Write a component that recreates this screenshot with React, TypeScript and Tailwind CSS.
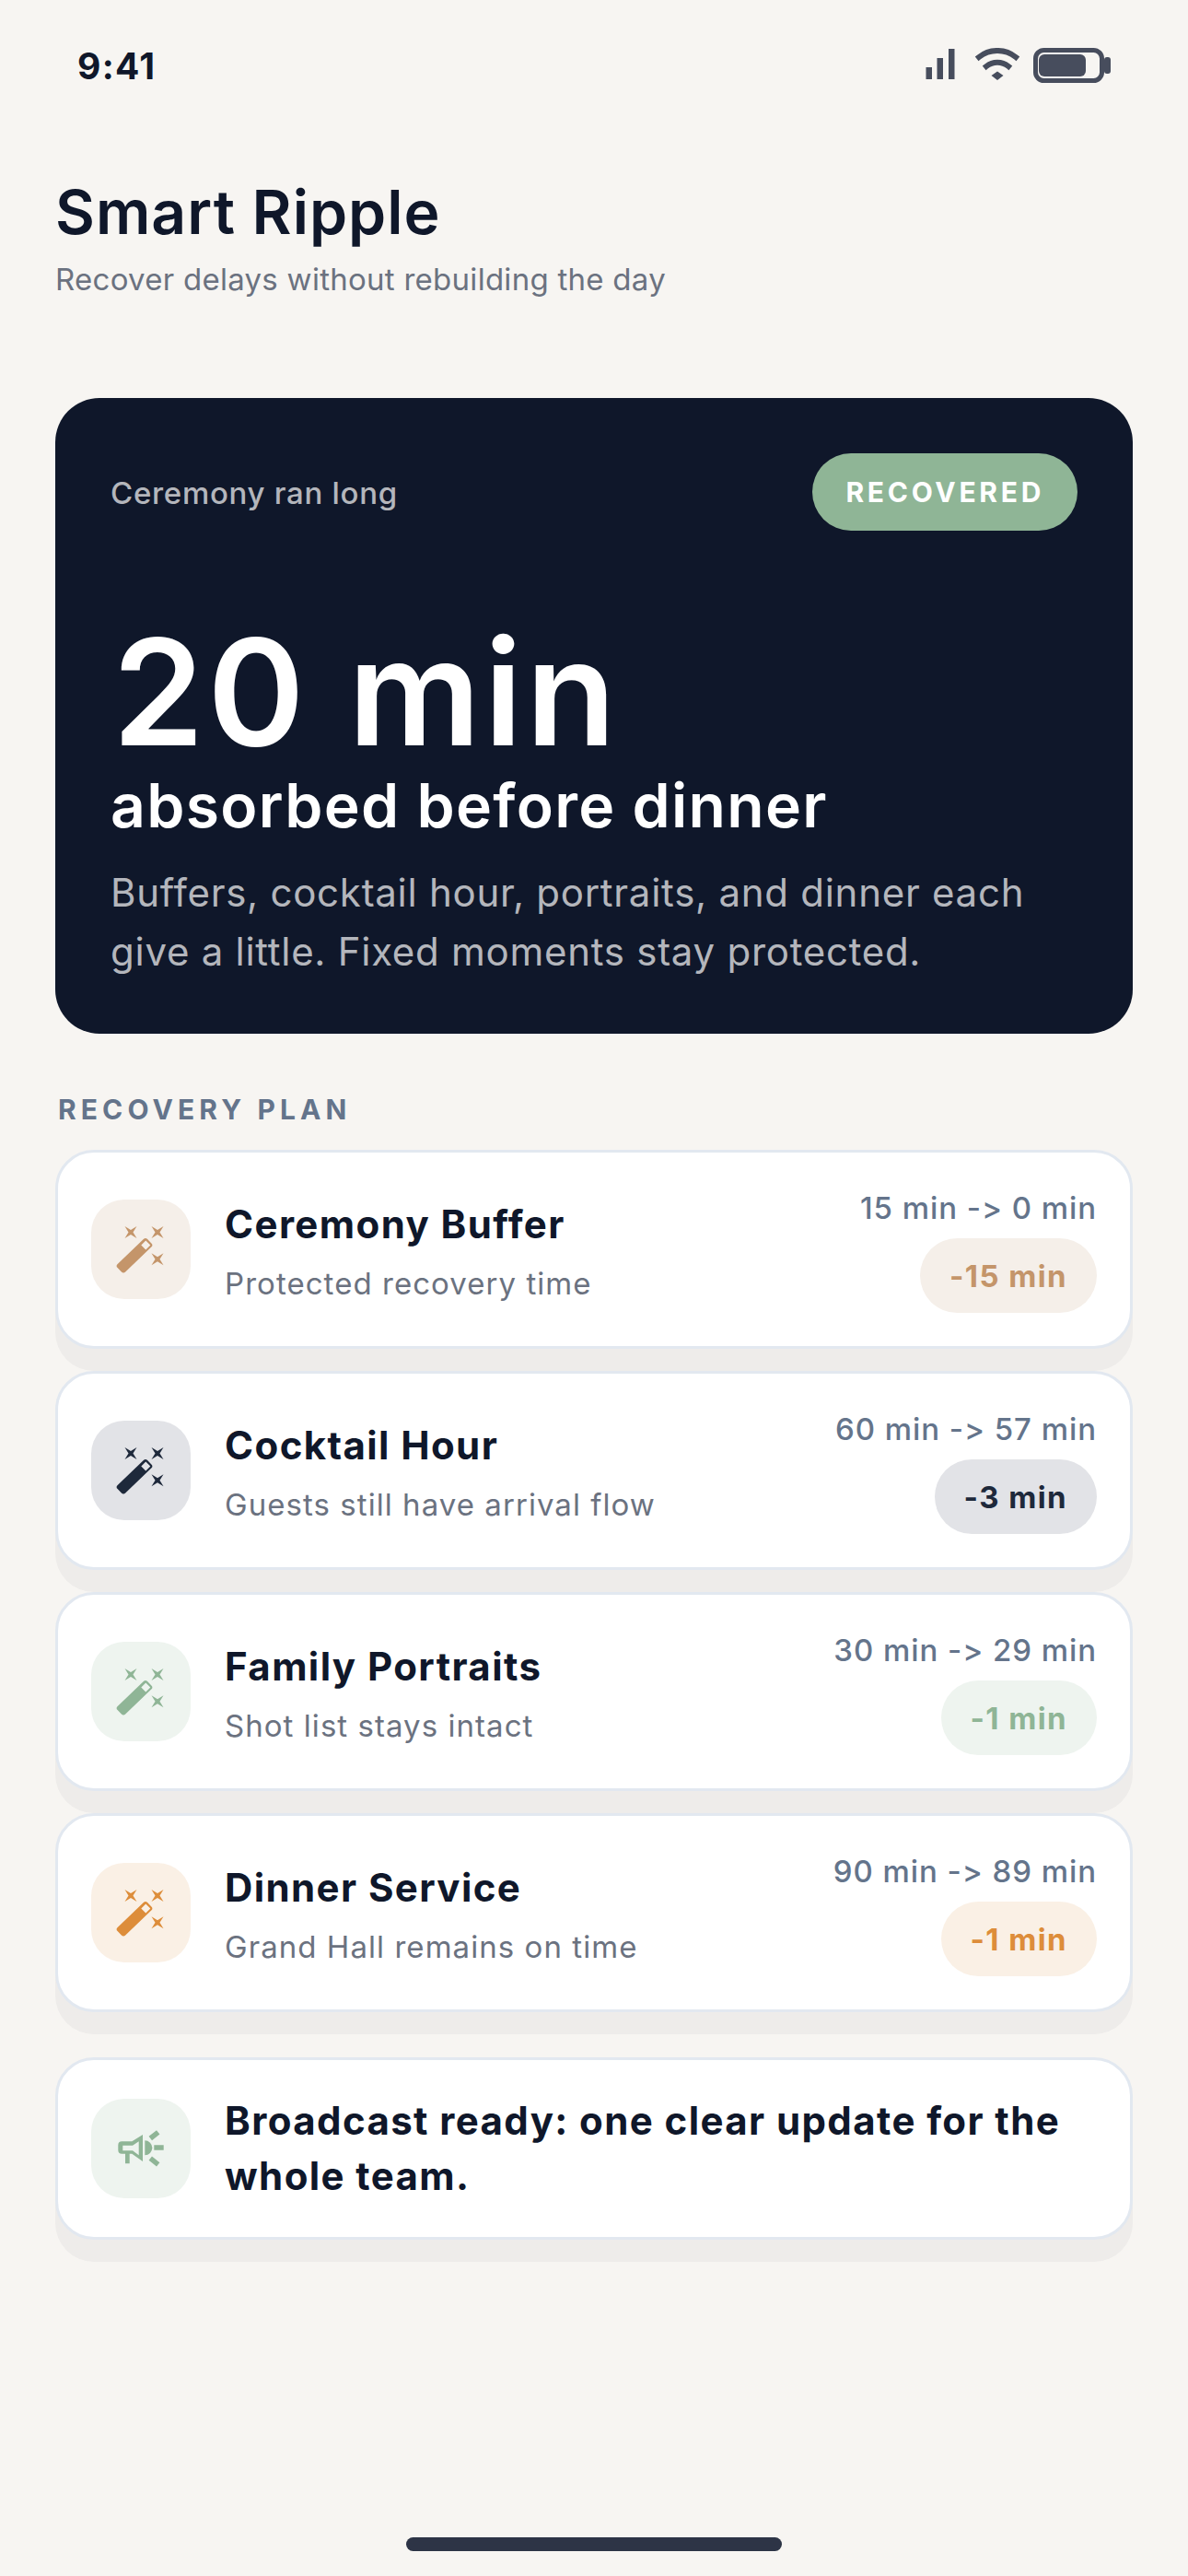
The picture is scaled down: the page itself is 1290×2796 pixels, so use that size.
const FONT = "font-['Inter',sans-serif]"

const STAR = 'M-6.5-6.5L0-2.5L6.5-6.5L2.5 0L6.5 6.5L0 2.5L-6.5 6.5L-2.5 0Z'

function WandIcon({ color }: { color: string }) {
  return (
    <svg width="108" height="108" viewBox="0 0 108 108" fill={color}>
      <path transform="translate(43 35.500)" d={STAR} />
      <path transform="translate(72 35.500)" d={STAR} />
      <path transform="translate(72 64.700)" d={STAR} />
      <path
        fillRule="evenodd"
        d="M56.800 43.100Q59 41 61.100 43.100L65.400 47.400Q67.500 49.500 65.300 51.600L37.200 78.400Q35 80.500 32.900 78.400L28.600 74.100Q26.500 72 28.700 69.900ZM59.300 44.500L54.300 49.500L59.300 54.500L64.300 49.500Z"
      />
    </svg>
  )
}

function MegaphoneIcon({ color }: { color: string }) {
  return (
    <svg width="108" height="108" viewBox="0 0 108 108" fill={color}>
      <path
        fillRule="evenodd"
        d="M56 39V68L44.300 59.700H41.700V70.300H37V59.700H33.300a4 4 0 0 1-4-4V50.300a4 4 0 0 1 4-4H44.300ZM34.300 50.700H45L51.700 46.300V61.300L45 56.300H34.300Z"
      />
      <path d="M58.300 45.300a8 8 0 0 1 0 16Z" />
      <path d="M64.300 43 72.700 36.300M68.300 53H78.700M64.300 64.700 72.700 71.300" stroke={color} strokeWidth="5.500" fill="none" />
    </svg>
  )
}

function StatusIcons() {
  return (
    <svg width="203" height="38" viewBox="0 0 203 38" fill="#474d5d">
      <rect x="2.500" y="21" width="6.500" height="13" />
      <rect x="14.500" y="11" width="6.500" height="23" />
      <rect x="27" y="1" width="6.500" height="33" />
      <path d="M60 10a32 32 0 0 1 40 0" fill="none" stroke="#474d5d" strokeWidth="6" strokeLinecap="square" />
      <path d="M68 20a19 19 0 0 1 24 0" fill="none" stroke="#474d5d" strokeWidth="6" strokeLinecap="square" />
      <path d="M80 25.500 86.500 30 80 35 73.500 30Z" />
      <rect x="121.500" y="2.500" width="72" height="33" rx="9" fill="none" stroke="#474d5d" strokeWidth="5" />
      <rect x="125" y="7" width="51" height="24" rx="6" />
      <rect x="196" y="10" width="7" height="18" rx="3" />
    </svg>
  )
}

const ROWS = [
  { title: 'Ceremony Buffer', sub: 'Protected recovery time', range: '15 min -> 0 min', delta: '-15 min', color: '#c4956a', bg: 'bg-[#f5efe9]', text: 'text-[#c4956a]' },
  { title: 'Cocktail Hour', sub: 'Guests still have arrival flow', range: '60 min -> 57 min', delta: '-3 min', color: '#1e293b', bg: 'bg-[#e2e3e7]', text: 'text-[#1e293b]' },
  { title: 'Family Portraits', sub: 'Shot list stays intact', range: '30 min -> 29 min', delta: '-1 min', color: '#8fb596', bg: 'bg-[#eef4ef]', text: 'text-[#8fb596]' },
  { title: 'Dinner Service', sub: 'Grand Hall remains on time', range: '90 min -> 89 min', delta: '-1 min', color: '#dd8d3a', bg: 'bg-[#faf0e5]', text: 'text-[#dd8d3a]' },
]

export default function App() {
  return (
    <div className={`${FONT} [font-variant-ligatures:none] relative flex h-[2796px] w-[1290px] flex-col overflow-hidden bg-[#f7f5f2] px-[60px]`}>
      <div className="mt-[52px] flex h-[38px] items-center justify-between pl-[24px] pr-[24px]">
        <span className="text-[39px] font-bold leading-none tracking-[1.300px] text-[#0f172a]">9:41</span>
        <StatusIcons />
      </div>

      <h1 className="mt-[101px] text-[66px] font-semibold leading-[78px] tracking-[1px] text-[#0f172a]">Smart Ripple</h1>
      <p className="mt-[12px] text-[33px] font-normal leading-[44px] tracking-[0.270px] text-[#6b7280]">Recover delays without rebuilding the day</p>

      <section className="mt-[107px] flex h-[690px] flex-col rounded-[48px] bg-[#0f172a] p-[60px]">
        <div className="flex items-center justify-between">
          <span className="mt-[4px] text-[33px] font-medium tracking-[0.700px] text-white/70">Ceremony ran long</span>
          <span className="flex h-[84px] items-center rounded-full bg-[#8fb596] px-[36px] text-[30px] font-bold tracking-[3.700px] text-white">RECOVERED</span>
        </div>
        <div className="mt-[100px] ml-[2px] text-[160px] font-semibold leading-[150px] tracking-[3.500px] text-white">20 min</div>
        <div className="mt-[6px] text-[66px] font-semibold leading-[84px] tracking-[1.300px] text-white">absorbed before dinner</div>
        <p className="mt-[21px] text-[42px] leading-[64px] tracking-[0.730px] text-white/70">Buffers, cocktail hour, portraits, and dinner each give a little. Fixed moments stay protected.</p>
      </section>

      <h2 className="mt-[64px] ml-[3px] text-[30px] font-bold leading-[36px] tracking-[5.100px] text-[#64748b]">RECOVERY PLAN</h2>

      <div className="mt-[26px] flex flex-col gap-[24px]">
        {ROWS.map(r => (
          <div key={r.title} className="flex h-[216px] items-center gap-[37px] rounded-[42px] border-[3px] border-[#e2e8f0] bg-white px-[36px] shadow-[0_24px_0_rgba(15,23,42,0.04)]">
            <div className={`flex size-[108px] shrink-0 items-center justify-center rounded-[36px] ${r.bg}`}>
              <WandIcon color={r.color} />
            </div>
            <div className="min-w-0 flex-1 pt-[3px]">
              <div className="text-[42px] font-bold leading-[56px] tracking-[1.400px] text-[#0f172a]">{r.title}</div>
              <div className="mt-[14px] text-[33px] leading-[44px] tracking-[1.050px] text-[#6b7280]">{r.sub}</div>
            </div>
            <div className="flex flex-col items-end gap-[8px]">
              <div className="text-[33px] font-medium leading-[49px] tracking-[0.950px] text-[#64748b]">{r.range}</div>
              <div className={`flex h-[81px] items-center rounded-full px-[32px] pt-[3px] text-[33px] font-bold tracking-[1.400px] ${r.bg} ${r.text}`}>{r.delta}</div>
            </div>
          </div>
        ))}
      </div>

      <div className="mt-[49px] flex h-[198px] items-center gap-[37px] rounded-[42px] border-[3px] border-[#e2e8f0] bg-white px-[36px] shadow-[0_24px_0_rgba(15,23,42,0.04)]">
        <div className="flex size-[108px] shrink-0 items-center justify-center rounded-[36px] bg-[#eef4ef]">
          <MegaphoneIcon color="#8fb596" />
        </div>
        <p className="text-[42px] font-bold leading-[60px] tracking-[1.400px] text-[#0f172a]">Broadcast ready: one clear update for the whole team.</p>
      </div>

      <div className="absolute bottom-[27px] left-[441px] h-[15px] w-[408px] rounded-full bg-[#2d3446]" />
    </div>
  )
}
